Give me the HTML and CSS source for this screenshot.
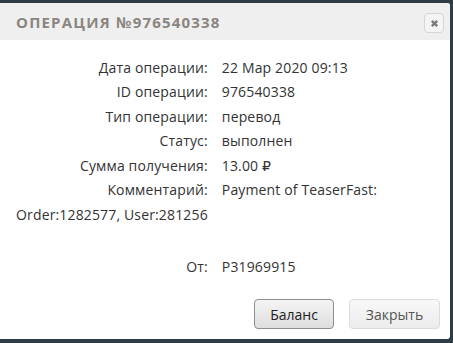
FILE: index.html
```html
<!DOCTYPE html>
<html lang="ru">
<head>
  <meta charset="UTF-8" />
  <meta name="viewport" content="width=device-width, initial-scale=1.0"/>
  <title>Операция №976540338</title>
  <link rel="stylesheet" href="styles.css">
</head>
<body>

  <div class="dialog">
    <div class="dialog-header">
      <h2 class="dialog-title">Операция №976540338</h2>
      <button class="close-button" aria-label="Закрыть">
        <svg class="close-icon" viewBox="0 0 10 10">
          <path d="M2 2l6 6M8 2l-6 6"></path>
        </svg>
      </button>
    </div>
    <div class="dialog-body">
      <table class="info">
        <tr><td class="label">Дата операции:</td><td class="value">22 Мар 2020 09:13</td></tr>
        <tr><td class="label">ID операции:</td><td class="value">976540338</td></tr>
        <tr><td class="label">Тип операции:</td><td class="value">перевод</td></tr>
        <tr><td class="label">Статус:</td><td class="value">выполнен</td></tr>
        <tr><td class="label">Сумма получения:</td><td class="value">13.00 ₽</td></tr>
        <tr><td class="label">Комментарий:</td><td class="value">Payment of TeaserFast:</td></tr>
        <tr><td class="label wrap">Order:1282577, User:281256</td><td></td></tr>
        <tr class="spacer"><td></td><td></td></tr>
        <tr><td class="label">От:</td><td class="value">P31969915</td></tr>
      </table>
    </div>
    <div class="dialog-footer">
      <button class="btn btn-main">Баланс</button>
      <button class="btn btn-light">Закрыть</button>
    </div>
  </div>

</body>
</html>
```

FILE: styles.css
```css
* {
  margin: 0;
  padding: 0;
  box-sizing: border-box;
}

body {
  font-family: "Open Sans", "DejaVu Sans", sans-serif;
  background: #2e3c46;
  color: #333;
  width: 453px;
  height: 343px;
  padding: 3px 3px 4px 0;
}

.dialog {
  background: white;
  height: 336px;
  border-radius: 0 3px 3px 0;
  overflow: hidden;
  display: flex;
  flex-direction: column;
}

.dialog-header {
  background: #efefef;
  height: 37px;
  display: flex;
  align-items: center;
  justify-content: space-between;
  padding: 0 6px 0 16px;
}

.dialog-title {
  font-size: 15px;
  font-weight: bold;
  text-transform: uppercase;
  letter-spacing: 1.2px;
  color: #8a8580;
  margin-top: 1px;
}

.close-button {
  width: 20px;
  height: 20px;
  border: 1px solid #d6d6d6;
  border-radius: 4px;
  background: #f4f4f4;
  display: flex;
  align-items: center;
  justify-content: center;
  margin-top: 3px;
}

.close-icon {
  width: 9px;
  height: 9px;
  stroke: #7a7a7a;
  stroke-width: 2.6;
}

.dialog-body {
  flex: 1;
  padding: 15px 0 0 16px;
}

.info {
  border-collapse: collapse;
  font-size: 14px;
  letter-spacing: 0.15px;
  color: #333;
}

.info td {
  height: 24.5px;
  vertical-align: middle;
  white-space: nowrap;
}

.label {
  text-align: right;
  padding-right: 14px;
}

.label.wrap {
  text-align: left;
}

.spacer td {
  height: 28px;
}

.dialog-footer {
  display: flex;
  justify-content: flex-end;
  gap: 15px;
  padding: 0 10px 10px 0;
}

.btn {
  height: 30px;
  border-radius: 4px;
  font-family: "Open Sans", "DejaVu Sans", sans-serif;
  font-size: 14px;
  padding: 0 13px;
  cursor: pointer;
}

.btn-main {
  width: 80px;
  color: #222;
  border: 1px solid #8e8e8e;
  background: linear-gradient(to bottom, #f4f4f4, #dedede);
}

.btn-light {
  width: 91px;
  color: #555;
  border: 1px solid #dcdcdc;
  background: linear-gradient(to bottom, #f8f8f8, #ececec);
}
```
